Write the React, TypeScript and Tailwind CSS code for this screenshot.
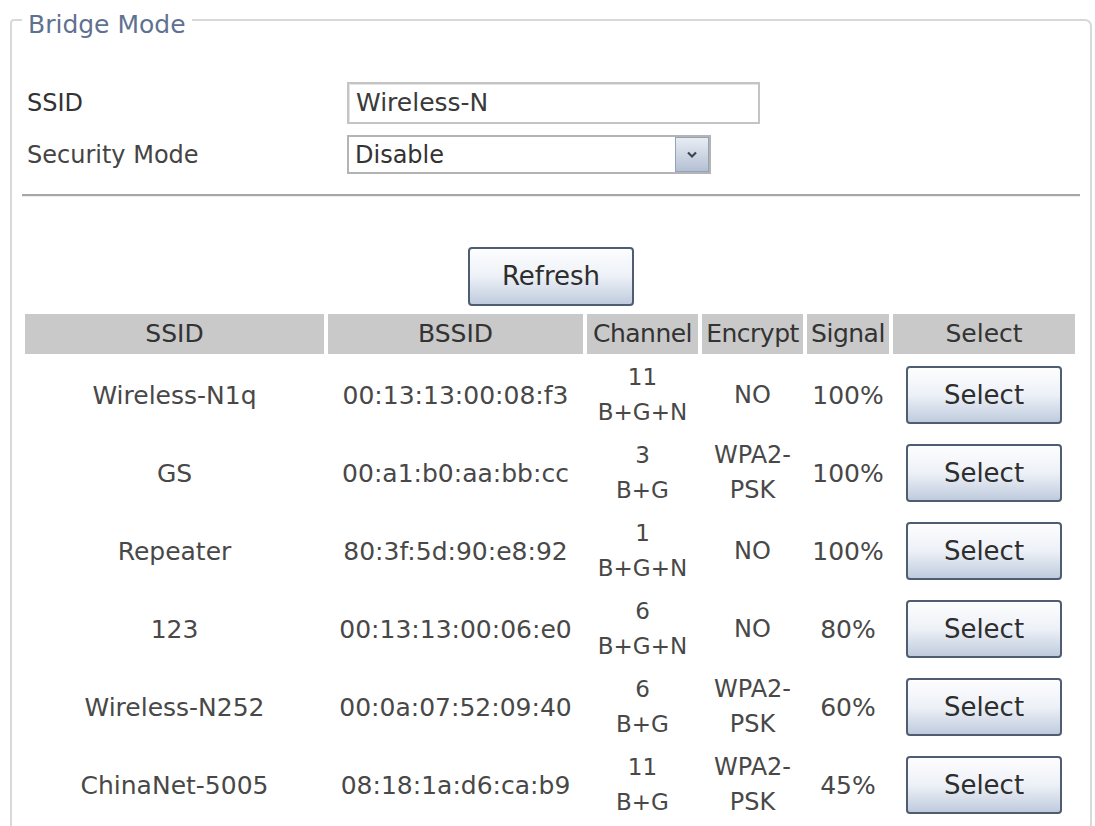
import React from 'react';

type Network = {
  ssid: string;
  bssid: string;
  channel: string;
  band: string;
  encrypt: string[];
  signal: string;
};

const networks: Network[] = [
  { ssid: 'Wireless-N1q', bssid: '00:13:13:00:08:f3', channel: '11', band: 'B+G+N', encrypt: ['NO'], signal: '100%' },
  { ssid: 'GS', bssid: '00:a1:b0:aa:bb:cc', channel: '3', band: 'B+G', encrypt: ['WPA2-', 'PSK'], signal: '100%' },
  { ssid: 'Repeater', bssid: '80:3f:5d:90:e8:92', channel: '1', band: 'B+G+N', encrypt: ['NO'], signal: '100%' },
  { ssid: '123', bssid: '00:13:13:00:06:e0', channel: '6', band: 'B+G+N', encrypt: ['NO'], signal: '80%' },
  { ssid: 'Wireless-N252', bssid: '00:0a:07:52:09:40', channel: '6', band: 'B+G', encrypt: ['WPA2-', 'PSK'], signal: '60%' },
  { ssid: 'ChinaNet-5005', bssid: '08:18:1a:d6:ca:b9', channel: '11', band: 'B+G', encrypt: ['WPA2-', 'PSK'], signal: '45%' },
];

function PlainButton({ label, className }: { label: string; className?: string }) {
  return (
    <button
      className={
        'border-2 border-[#4f5d72] rounded-[4px] bg-linear-to-b from-[#fdfdfe] via-[#edf1f7] to-[#bfcbdd] text-[#2e2e2e] shadow-[inset_0_1px_0_#ffffff] ' +
        (className ?? '')
      }
    >
      {label}
    </button>
  );
}

export default function App() {
  return (
    <div className="min-h-screen bg-white pl-[10px] font-['DejaVu_Sans',sans-serif]">
      <fieldset className="w-[1082px] border-2 border-[#d8d8d8] rounded-tl-[4px] rounded-tr-[7px] px-[10px] pb-[30px]">
        <legend className="px-[6px] pt-[10px] text-[25px] leading-[30px] text-[#5f7191]">Bridge Mode</legend>

        {/* form */}
        <div className="mt-[42px] grid grid-cols-[325px_1fr] items-center gap-y-[11px]">
          <span className="pl-[5px] text-[24px] text-[#333]">SSID</span>
          <div className="w-[413px] h-[42px] border-2 border-[#c4c4c4] shadow-[inset_1px_1px_0_#e4e4e4] flex items-center pl-[7px] text-[25px] text-[#3a3a3a]">
            Wireless-N
          </div>
          <span className="pl-[5px] text-[24px] text-[#444]">Security Mode</span>
          <div className="w-[364px] h-[39px] border-2 border-[#b4b4b4] flex items-center">
            <span className="flex-1 pl-[6px] text-[24px] text-[#333]">Disable</span>
            <span className="w-[34px] h-full border border-[#95a3b8] bg-linear-to-b from-[#e8edf4] to-[#b4c0d3] flex items-center justify-center">
              <svg width="14" height="9" viewBox="0 0 14 9">
                <path d="M3 2.5 L7 6.5 L11 2.5" fill="none" stroke="#3c4450" strokeWidth="2.2" />
              </svg>
            </span>
          </div>
        </div>

        <div className="mt-[20px] border-t-2 border-b border-t-[#a6a6a6] border-b-[#ececec]" />

        <div className="mt-[50px] flex justify-center">
          <PlainButton label="Refresh" className="w-[166px] h-[59px] text-[26px]" />
        </div>

        {/* site survey table */}
        <table className="mt-[4px] w-full table-fixed border-separate border-spacing-[4px] -mx-[1px]">
          <colgroup>
            <col className="w-[299px]" />
            <col className="w-[255px]" />
            <col className="w-[111px]" />
            <col className="w-[101px]" />
            <col className="w-[82px]" />
            <col />
          </colgroup>
          <thead>
            <tr className="h-[40px] text-[25px] text-[#333]">
              <th className="font-normal bg-[#c9c9c9] whitespace-nowrap">SSID</th>
              <th className="font-normal bg-[#c9c9c9] whitespace-nowrap">BSSID</th>
              <th className="font-normal bg-[#c9c9c9] whitespace-nowrap tracking-[-0.5px]">Channel</th>
              <th className="font-normal bg-[#c9c9c9] whitespace-nowrap tracking-[-0.5px]">Encrypt</th>
              <th className="font-normal bg-[#c9c9c9] whitespace-nowrap tracking-[-0.5px]">Signal</th>
              <th className="font-normal bg-[#c9c9c9] whitespace-nowrap">Select</th>
            </tr>
          </thead>
          <tbody>
            {networks.map((n) => (
              <tr key={n.bssid} className="h-[74px] text-center text-[#484848]">
                <td className="text-[25px] leading-[35px]">{n.ssid}</td>
                <td className="text-[25px] leading-[35px] whitespace-nowrap">{n.bssid}</td>
                <td className="text-[23px] leading-[35px]">
                  <div>{n.channel}</div>
                  <div>{n.band}</div>
                </td>
                <td className="text-[24px] leading-[35px]">
                  {n.encrypt.map((e) => (
                    <div key={e}>{e}</div>
                  ))}
                </td>
                <td className="text-[25px] leading-[35px]">{n.signal}</td>
                <td>
                  <PlainButton label="Select" className="w-[156px] h-[58px] text-[26px] align-middle" />
                </td>
              </tr>
            ))}
          </tbody>
        </table>
      </fieldset>
    </div>
  );
}
